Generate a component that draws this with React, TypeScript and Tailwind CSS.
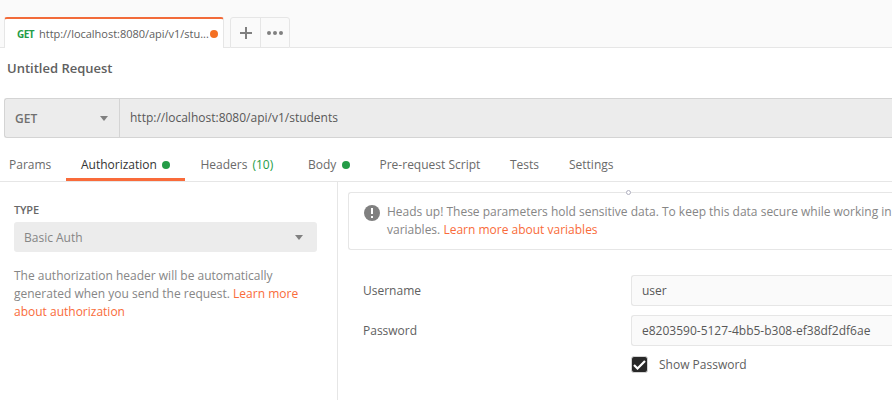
import type { ReactNode } from "react";

function Caret() {
  return (
    <svg width="8" height="5" viewBox="0 0 8 5" className="shrink-0">
      <path d="M0 0h8L4 5z" fill="#808080" />
    </svg>
  );
}

function Dot() {
  return <span className="ml-[5px] h-2 w-2 shrink-0 rounded-full bg-[#249c47]" />;
}

function Tab({ className, children }: { className: string; children: ReactNode }) {
  return <div className={`flex h-full shrink-0 items-center ${className}`}>{children}</div>;
}

function RequestTabs() {
  return (
    <div className="flex h-12 items-end bg-[#fafafa]">
      <div className="h-px w-1 bg-[#e6e6e6]" />
      <div className="flex h-[31px] w-[220px] items-center rounded-t-[3px] border-x border-t-2 border-x-[#e6e6e6] border-t-[#f26b3a] bg-white pl-3">
        <span className="w-[22px] shrink-0 pt-px text-[10px] font-bold tracking-[-0.6px] text-[#249c47]">GET</span>
        <span className="w-[171px] shrink-0 whitespace-nowrap pt-px text-[11px] tracking-[-0.02px] text-[#606060]">
          http://localhost:8080/api/v1/stu...
        </span>
        <span className="h-2 w-2 shrink-0 rounded-full bg-[#f47023]" />
      </div>
      <div className="h-px w-[6px] bg-[#e6e6e6]" />
      <div className="flex h-[31px] w-[60px] rounded-t-[3px] border border-[#e6e6e6]">
        <div className="flex w-[30px] items-center justify-center border-r border-[#e6e6e6]">
          <svg width="12" height="12" viewBox="0 0 12 12" fill="#808080">
            <path d="M5 0h2v5h5v2H7v5H5V7H0V5h5z" />
          </svg>
        </div>
        <div className="flex flex-1 items-center justify-center gap-[2px]">
          <span className="h-1 w-1 rounded-full bg-[#808080]" />
          <span className="h-1 w-1 rounded-full bg-[#808080]" />
          <span className="h-1 w-1 rounded-full bg-[#808080]" />
        </div>
      </div>
      <div className="h-px flex-1 bg-[#e6e6e6]" />
    </div>
  );
}

function UrlBar() {
  return (
    <div className="ml-1 flex h-10 rounded-l-[3px] border-y border-l border-[#d4d4d4] bg-[#ececec]">
      <div className="flex w-[115px] items-center justify-between border-r border-[#d4d4d4] pl-[10px] pr-[11px]">
        <span className="pt-px text-xs font-semibold text-[#707070]">GET</span>
        <Caret />
      </div>
      <div className="flex items-center pl-[10px] text-xs text-[#585858]">http://localhost:8080/api/v1/students</div>
    </div>
  );
}

function SectionTabs() {
  return (
    <div className="flex h-11 border-b border-[#e6e6e6] pl-[9px] text-xs text-[#6a6a6a]">
      <Tab className="w-[57px] pt-[10px]">Params</Tab>
      <div className="h-[43px] w-[119px] border-b-[3px] border-[#f96b3a] pl-[15px]">
        <Tab className="pt-[13px] text-[#333333]">
          Authorization
          <Dot />
        </Tab>
      </div>
      <Tab className="w-[123px] pl-[15.5px] pt-[10px]">
        Headers<span className="ml-[5px] text-[#249c47]">(10)</span>
      </Tab>
      <Tab className="w-[71px] pt-[10px]">
        Body
        <span className="w-px" />
        <Dot />
      </Tab>
      <Tab className="w-[131px] pl-[0.5px] pt-[10px]">Pre-request Script</Tab>
      <Tab className="w-[59px] pt-[10px]">Tests</Tab>
      <Tab className="pt-[10px]">Settings</Tab>
    </div>
  );
}

function AuthType() {
  return (
    <div className="w-[338px] shrink-0 border-r border-[#e6e6e6] pl-[14px] pt-5 text-xs text-[#868686]">
      <div className="h-5 text-[11px] font-semibold leading-[15px] tracking-[-0.2px] text-[#686868]">TYPE</div>
      <div className="flex h-[30px] w-[303px] items-center justify-between rounded-[3px] bg-[#ececec] pl-[10px] pr-[14px]">
        <span className="pt-[2px]">Basic Auth</span>
        <Caret />
      </div>
      <p className="mt-[15px] leading-[18px]">
        The authorization header will be automatically
        <br />
        generated when you send the request. <a className="text-[#f96b3a]">Learn more</a>
        <br />
        <a className="text-[#f96b3a]">about authorization</a>
      </p>
    </div>
  );
}

function Field({ label, value }: { label: string; value: string }) {
  return (
    <div className="flex h-[31px] items-center">
      <span className="w-[268px] shrink-0 text-[#606060]">{label}</span>
      <div className="flex h-full flex-1 items-center rounded-l-[3px] border-y border-l border-[#e6e6e6] bg-[#fafafa] pl-[10px] text-[#585858]">
        {value}
      </div>
    </div>
  );
}

function Credentials() {
  return (
    <div className="min-w-0 flex-1 pl-[10px] pt-[10px] text-xs">
      <div className="relative flex h-[58px] rounded-l-[3px] border-y border-l border-[#e6e6e6] pl-[15px] pt-[10px] leading-[18px] text-[#868686]">
        <span className="absolute left-[277px] top-[-3px] h-[5px] w-[5px] rounded-full border border-[#b0b0c0] bg-white" />
        <svg width="16" height="16" viewBox="0 0 16 16" className="mt-[2px] shrink-0">
          <circle cx="8" cy="8" r="8" fill="#808080" />
          <path d="M7 3h2v6H7zM7 11h2v2H7z" fill="white" />
        </svg>
        <p className="ml-[7px] whitespace-nowrap">
          Heads up! These parameters hold sensitive data. To keep this data secure while working in
          <br />
          variables. <a className="text-[#f96b3a]">Learn more about variables</a>
        </p>
      </div>
      <div className="flex flex-col gap-[9px] pl-[15px] pt-[25px]">
        <Field label="Username" value="user" />
        <Field label="Password" value="e8203590-5127-4bb5-b308-ef38df2df6ae" />
        <div className="flex items-center pl-[268px] pt-px text-[#606060]">
          <span className="flex h-[17px] w-[17px] items-center justify-center rounded-[3px] border border-[#d4d4d4] bg-[#282828]">
            <svg width="13" height="10" viewBox="0 0 13 10" fill="none" stroke="white" strokeWidth="2.2">
              <path d="M1 5l3.5 3.5L12 1" />
            </svg>
          </span>
          <span className="ml-[11px]">Show Password</span>
        </div>
      </div>
    </div>
  );
}

export default function App() {
  return (
    <div className="flex h-[400px] w-[892px] flex-col overflow-hidden bg-white font-['Open_Sans',sans-serif]">
      <RequestTabs />
      <h1 className="h-[50px] pl-[7px] pt-[10px] text-[13px] font-semibold leading-5 text-[#606060]">Untitled Request</h1>
      <UrlBar />
      <SectionTabs />
      <div className="flex flex-1">
        <AuthType />
        <Credentials />
      </div>
    </div>
  );
}
